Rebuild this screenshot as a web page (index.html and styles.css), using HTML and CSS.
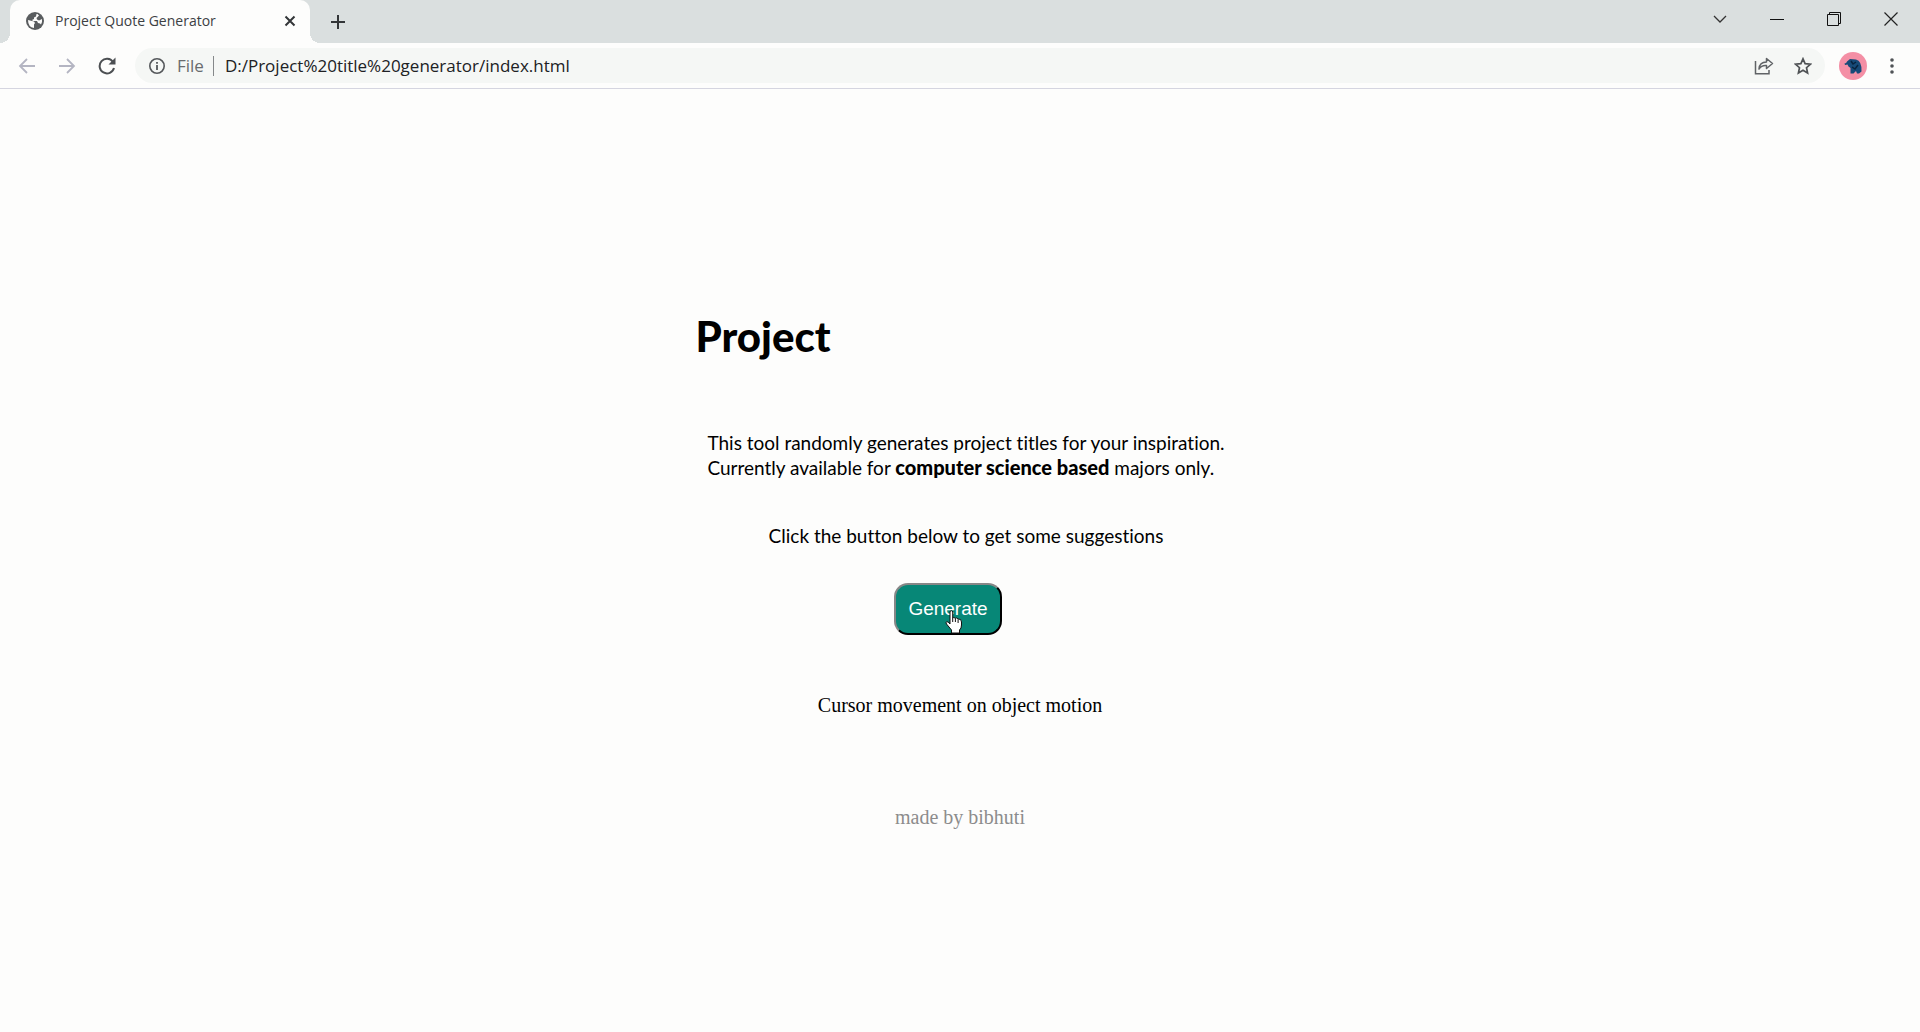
FILE: index.html
```html
<!DOCTYPE html>
<html lang="en">
<head>
<meta charset="utf-8">
<title>Project Quote Generator</title>
<link rel="stylesheet" href="styles.css">
</head>
<body>
<header class="browser">
  <div class="tab-strip">
    <div class="tab">
      <svg class="globe" viewBox="0 0 18 18" width="18" height="18" aria-hidden="true"><circle cx="9" cy="9" r="9" fill="#5a5d5f"/><path d="M2 8L6 9L8 9.500L9 11L8 12.500V16Q2 15 2 8ZM9 2L10.500 2L10 4.500L8 5.500V7L6 8L7 9H11L12 11L14 11.500L15 12.500Q16.500 10 16 7L13 8.500L11 7.500L10.500 6L13 3.500L11.500 2Z" fill="#fdfdfc"/></svg>
      <span class="tab-title">Project Quote Generator</span>
      <button class="icon-button tab-close" aria-label="Close tab"><svg viewBox="0 0 12 12" width="12" height="12"><path d="M1.500 1.500L10.500 10.500M10.500 1.500L1.500 10.500" stroke="#333638" stroke-width="2"/></svg></button>
    </div>
    <button class="icon-button new-tab" aria-label="New tab"><svg viewBox="0 0 16 16" width="16" height="16"><path d="M8 1V15M1 8H15" stroke="#333638" stroke-width="2"/></svg></button>
    <div class="window-controls">
      <button class="icon-button" aria-label="Search tabs"><svg viewBox="0 0 14 14" width="14" height="14"><path d="M1 4L7 10L13 4" fill="none" stroke="#333" stroke-width="1.300"/></svg></button>
      <button class="icon-button" aria-label="Minimize"><svg viewBox="0 0 14 14" width="14" height="14"><path d="M0 7.500H14" stroke="#111"/></svg></button>
      <button class="icon-button" aria-label="Restore"><svg viewBox="0 0 14 14" width="14" height="14"><path d="M.5 2.500H11.500V13.500H.5ZM2.500 2.500V.5H13.500V11.500H11.500" fill="none" stroke="#111"/></svg></button>
      <button class="icon-button" aria-label="Close"><svg viewBox="0 0 14 14" width="14" height="14"><path d="M.5 .5L13.500 13.500M13.500 .5L.5 13.500" stroke="#222" stroke-width="1.200"/></svg></button>
    </div>
  </div>
  <div class="toolbar">
    <nav class="nav-buttons" aria-label="History">
      <button class="icon-button" aria-label="Back"><svg viewBox="0 0 18 18" width="18" height="18"><path d="M17 9H2M9 2L2 9L9 16" fill="none" stroke="#b4b5c2" stroke-width="1.800"/></svg></button>
      <button class="icon-button" aria-label="Forward"><svg viewBox="0 0 18 18" width="18" height="18"><path d="M1 9H16M9 2L16 9L9 16" fill="none" stroke="#b4b5c2" stroke-width="1.800"/></svg></button>
      <button class="icon-button" aria-label="Reload"><svg viewBox="0 0 18 18" width="18" height="18"><path d="M15 5A7.300 7.300 0 1 0 16 11" fill="none" stroke="#4c4f52" stroke-width="2"/><path d="M17.500 .5V7.500H10.500Z" fill="#4c4f52"/></svg></button>
    </nav>
    <div class="omnibox">
      <svg viewBox="0 0 16 16" width="16" height="16" aria-hidden="true"><circle cx="8" cy="8" r="7.200" fill="none" stroke="#55585b" stroke-width="1.600"/><path d="M8 7V12M8 4V5.700" stroke="#55585b" stroke-width="1.800"/></svg>
      <label class="scheme" for="address">File</label>
      <input class="address" id="address" type="text" value="D:/Project%20title%20generator/index.html">
      <button class="icon-button" aria-label="Share"><svg viewBox="0 0 20 18" width="20" height="18"><path d="M1.500 4V16.800H15V13" fill="none" stroke="#606366" stroke-width="1.500"/><path d="M5 12Q5.500 5 12.500 5V1.500L18.500 6.500L12.500 11.500V8.500Q7.500 8 5 12Z" fill="none" stroke="#606366" stroke-width="1.500" stroke-linejoin="round"/></svg></button>
      <button class="icon-button" aria-label="Bookmark"><svg viewBox="0 0 18 18" width="18" height="18"><path d="M9 1.800L11.100 6.600L16.500 7.100L12.500 10.700L13.600 16L9 13.300L4.400 16L5.500 10.700L1.500 7.100L6.900 6.600Z" fill="none" stroke="#505356" stroke-width="1.700"/></svg></button>
    </div>
    <button class="icon-button" aria-label="Profile"><svg viewBox="0 0 28 28" width="28" height="28"><circle cx="14" cy="14" r="14" fill="#f48fa5"/><path d="M5.500 11.500Q7.500 11.500 8 9.500L11 7L17 7.500Q23 9 22.500 19.500L20 21.500H18L17 19L14.500 21.500H11.500V16L9.500 14.500L8.500 12.500L6 13Z" fill="#174a78"/><path d="M12 9L14 12L17 10M13 15L16 17L19 13" fill="none" stroke="#08233f" stroke-width="1.500"/></svg></button>
    <button class="icon-button menu" aria-label="Menu"><svg viewBox="0 0 4 16" width="4" height="16"><circle cx="2" cy="2" r="1.800" fill="#505356"/><circle cx="2" cy="8" r="1.800" fill="#505356"/><circle cx="2" cy="14" r="1.800" fill="#505356"/></svg></button>
  </div>
</header>
<main class="page">
  <div class="intro">
    <h1 class="title">Project</h1>
    <p class="text">This tool randomly generates project titles for your inspiration.<br>Currently available for <b>computer science based</b> majors only.</p>
    <p class="text prompt">Click the button below to get some suggestions</p>
  </div>
  <div class="action">
    <button class="generate">Generate</button>
    <svg class="pointer" viewBox="0 0 18 24" width="18" height="24" aria-hidden="true"><path d="M5 2Q5 .7 6.300 .7T7.700 2V8Q8.700 6.800 10.300 8.300Q11.800 7.300 13 9Q16.500 8.500 16.500 12V15Q16.500 18.500 14.500 20V23H6.500V20L1.500 14Q.5 12.500 1.500 11.800Q3 11 5 14Z" fill="#fff" stroke="#111"/><path d="M7.700 8V12M10.400 8.500V12M13.100 9.500V13" stroke="#111"/></svg>
  </div>
  <p class="note">Cursor movement on object motion</p>
  <footer class="credit">made by bibhuti</footer>
</main>
</body>
</html>
```
FILE: styles.css
```css
* {
  box-sizing: border-box;
}

body {
  margin: 0;
  min-height: 100vh;
  background: #fdfdfc;
  color: #000;
}

.icon-button {
  display: flex;
  align-items: center;
  justify-content: center;
  padding: 0;
  border: 0;
  background: none;
}

.browser {
  font-family: "Open Sans", "Noto Sans", sans-serif;
  border-bottom: 1px solid #d5d5e0;
}

.tab-strip {
  display: flex;
  height: 43px;
  padding-left: 10px;
  background: #dadfdf;
}

.tab {
  position: relative;
  display: flex;
  align-items: center;
  gap: 11px;
  width: 300px;
  padding: 0 14px 2px 16px;
  border-radius: 10px 10px 0 0;
  background: #fdfdfc;
}

.tab::before,
.tab::after {
  content: "";
  position: absolute;
  bottom: 0;
  width: 10px;
  height: 10px;
}

.tab::before {
  right: 100%;
  background: radial-gradient(circle at 0 0, #dadfdf 10px, #fdfdfc 10px);
}

.tab::after {
  left: 100%;
  background: radial-gradient(circle at 100% 0, #dadfdf 10px, #fdfdfc 10px);
}

.tab-title {
  flex: 1;
  font-size: 14px;
  line-height: 20px;
  color: #3c4043;
}

.new-tab {
  width: 55px;
}

.window-controls {
  display: flex;
  margin-left: auto;
  height: 37px;
  padding-right: 1px;
}

.window-controls .icon-button {
  width: 57px;
}

.toolbar {
  display: flex;
  align-items: center;
  height: 45px;
  padding-right: 26px;
}

.nav-buttons {
  display: flex;
  gap: 22px;
  padding: 0 19px 0 18px;
}

.omnibox {
  display: flex;
  flex: 1;
  align-items: center;
  height: 35px;
  margin-right: 14px;
  padding: 0 13px 0 14px;
  border-radius: 18px;
  background: #f5f7f5;
}

.omnibox .icon-button + .icon-button {
  margin-left: 20px;
}

.scheme {
  margin-left: 12px;
  padding-right: 9px;
  border-right: 1px solid #85888a;
  font-size: 17px;
  line-height: 20px;
  color: #686b6e;
}

.address {
  flex: 1;
  min-width: 0;
  padding: 0 0 0 11px;
  border: 0;
  background: none;
  font-family: inherit;
  font-size: 17px;
  line-height: 20px;
  color: #202124;
}

.menu {
  margin-left: 23px;
}

.page {
  display: flex;
  flex-direction: column;
  align-items: center;
  padding: 223px 16px 40px;
  font-family: "Liberation Serif", serif;
  font-size: 20px;
  line-height: 24px;
}

.intro {
  font-family: "Gill Sans", "Gill Sans MT", Lato, sans-serif;
  font-variant-ligatures: none;
}

.title {
  margin: 0 0 71px;
  font-size: 42px;
  font-weight: 900;
  line-height: 48px;
}

.text {
  margin: 0 0 44px;
  padding-left: 12px;
  font-size: 19px;
}

.text b {
  font-size: 20px;
  font-weight: 900;
}

.prompt {
  margin-bottom: 35px;
  text-align: center;
}

.action {
  position: relative;
  margin-right: 24px;
}

.generate {
  display: block;
  height: 52px;
  padding: 0 12px;
  border: 2px outset #333;
  border-radius: 14px;
  background: #078777;
  color: #fff;
  font-family: "Liberation Sans", Arial, sans-serif;
  font-size: 19px;
}

.pointer {
  position: absolute;
  left: 51px;
  top: 27px;
}

.note {
  margin: 58px 0 88px;
}

.credit {
  color: #8c8c8c;
}
```
